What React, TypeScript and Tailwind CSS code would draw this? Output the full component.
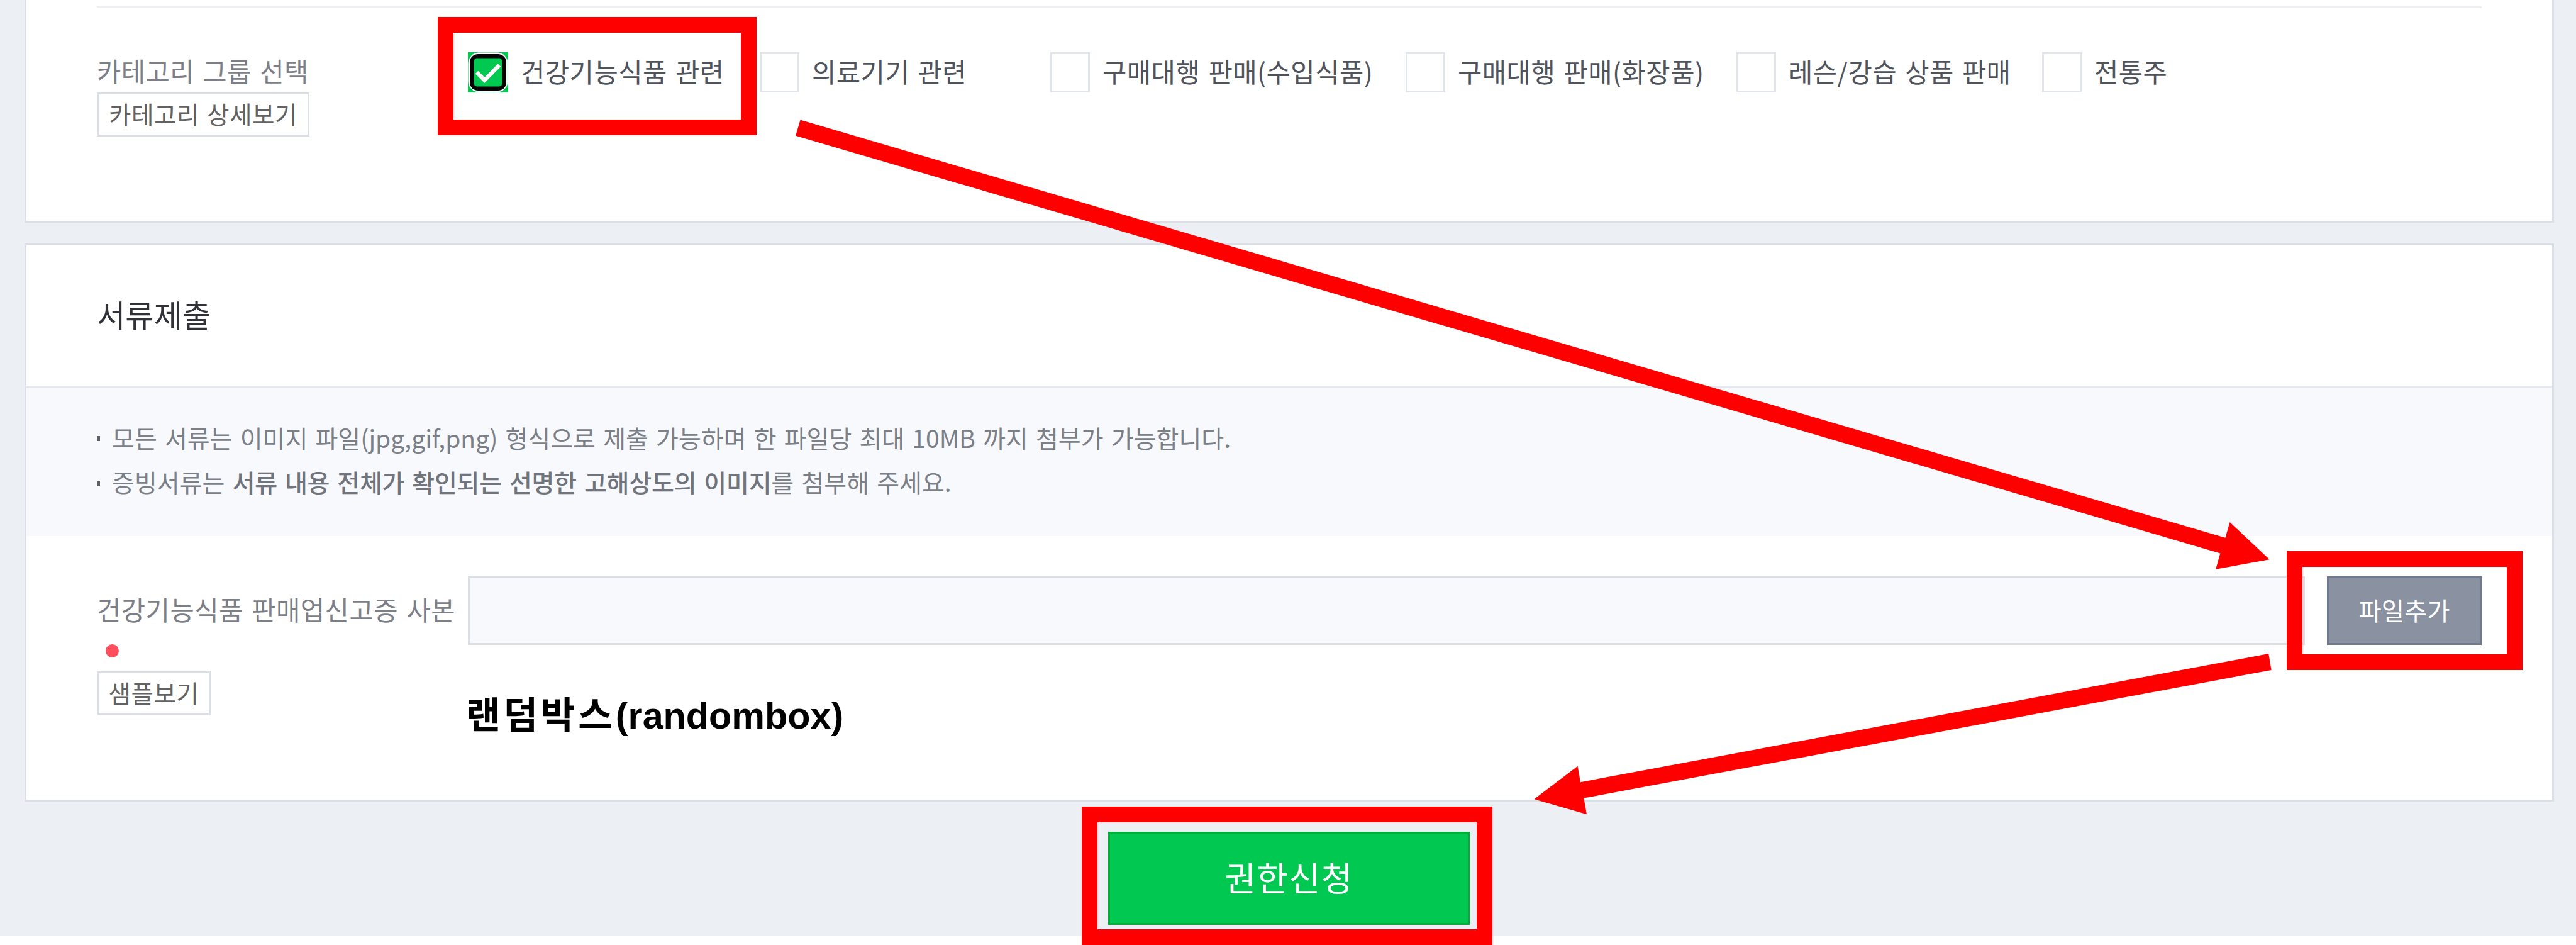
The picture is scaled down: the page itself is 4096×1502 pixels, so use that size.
import React from "react";

function CheckedBox() {
  return (
    <svg className="h-16 w-16 shrink-0" viewBox="0 0 64 64">
      <rect width="64" height="64" fill="#00c850" />
      <rect x="0.5" y="0.5" width="63" height="63" rx="17" fill="#ffffff" />
      <rect x="3" y="3" width="58" height="58" rx="13" fill="#050505" />
      <rect x="9.5" y="9.5" width="45" height="45" rx="5" fill="#00c850" />
      <path d="M14 32 L26.5 44.5 L50 20.5" fill="none" stroke="#ffffff" strokeWidth="6.5" />
    </svg>
  );
}

function Option({ label, checked = false }: { label: string; checked?: boolean }) {
  return (
    <label className="flex h-16 items-center gap-5 text-[#4f535c]">
      {checked ? (
        <CheckedBox />
      ) : (
        <span className="h-16 w-[63px] shrink-0 border-3 border-[#e1e5eb] bg-white" />
      )}
      <span className="-mt-[5px] whitespace-nowrap text-[41.7px] leading-[60px] tracking-[0.45px] [word-spacing:3.4px]">
        {label}
      </span>
    </label>
  );
}

function SmallButton({ label, className }: { label: string; className: string }) {
  return (
    <button
      className={`flex h-[70px] items-center justify-center whitespace-nowrap border-3 border-[#dcdee5] bg-white pb-1 text-[38.6px] leading-none tracking-[0.5px] text-[#626262] [word-spacing:3px] ${className}`}
    >
      {label}
    </button>
  );
}

function Notice({ children }: { children: React.ReactNode }) {
  return (
    <li className="flex h-[70.5px] items-center">
      <span className="mt-1 mr-[19px] h-2 w-[5px] bg-[#5d6068]" />
      <span className="-mt-px whitespace-nowrap leading-[70px]">{children}</span>
    </li>
  );
}

function Annotations() {
  return (
    <>
      <div className="absolute top-[27px] left-[696px] h-[188px] w-[507px] border-25 border-[#ff0000]" />
      <div className="absolute top-[876px] left-[3636px] h-[189px] w-[375px] border-25 border-[#ff0000]" />
      <div className="absolute top-[1282px] left-[1720px] h-[220px] w-[653px] border-25 border-[#ff0000]" />
      <svg
        className="pointer-events-none absolute inset-0 h-full w-full"
        viewBox="0 0 4400 1613"
        preserveAspectRatio="none"
        fill="#ff0000"
      >
        <path d="M1367 204.7 L3801 918 L3808.7 891.4 L3876.5 954.9 L3784.7 971.7 L3792.3 944.4 L1359 231.7 Z" />
        <path d="M3875 1115.9 L2699.6 1335 L2694.7 1307.7 L2620.4 1364 L2710.2 1390 L2705.3 1362.3 L3879.6 1143.6 Z" />
      </svg>
    </>
  );
}

export default function App() {
  return (
    <div className="relative h-[1502px] w-[4096px] overflow-hidden bg-white font-['Noto_Sans_CJK_KR',sans-serif]">
      <main className="flex h-[1488px] flex-col bg-[#eceff4] pr-[35px] pl-[39px]">
        <section className="h-[354px] border-x-3 border-b-3 border-[#dcdee5] bg-white pt-[10px] pr-[112px] pl-[112px]">
          <div className="h-[3px] bg-[#edeff5]" />
          <div className="flex pt-[70px]">
            <div className="w-[590px] shrink-0">
              <div className="-mt-1 flex h-[68px] items-center text-[41.7px] leading-none tracking-[0.4px] text-[#7c7f87] [word-spacing:3.6px]">
                카테고리 그룹 선택
              </div>
              <SmallButton label="카테고리 상세보기" className="w-[338px]" />
            </div>
            <div className="grid h-16 grid-cols-[464px_462px_565px_526px_486px_400px]">
              <Option label="건강기능식품 관련" checked />
              <Option label="의료기기 관련" />
              <Option label="구매대행 판매(수입식품)" />
              <Option label="구매대행 판매(화장품)" />
              <Option label="레슨/강습 상품 판매" />
              <Option label="전통주" />
            </div>
          </div>
        </section>

        <section className="mt-[33px] h-[887px] border-3 border-[#dcdee5] bg-white">
          <h2 className="flex h-[226px] items-center border-b-3 border-[#e4e7ee] pb-1.5 pl-[112px] text-[49.3px] text-[#303238]">
            서류제출
          </h2>
          <ul className="h-[236px] bg-[#f8f9fd] pt-[44px] pl-[112px] text-[39px] text-[#7b7f87] [word-spacing:3.4px]">
            <Notice>모든 서류는 이미지 파일(jpg,gif,png) 형식으로 제출 가능하며 한 파일당 최대 10MB 까지 첨부가 가능합니다.</Notice>
            <Notice>
              증빙서류는{" "}
              <b className="font-medium tracking-[-0.2px] text-[#70747c]">서류 내용 전체가 확인되는 선명한 고해상도의 이미지</b>를
              첨부해 주세요.
            </Notice>
          </ul>
          <div className="flex pt-16 pr-[112px] pl-[112px]">
            <div className="w-[590px] shrink-0">
              <div className="flex h-[108px] items-center whitespace-nowrap pb-0.5 text-[41.7px] leading-none tracking-[0.45px] text-[#7c7f87] [word-spacing:3.6px]">
                건강기능식품 판매업신고증 사본
              </div>
              <div className="ml-[14px] h-[21px] w-[21px] rounded-full bg-[#ff4f5e]" />
              <SmallButton label="샘플보기" className="mt-[22px] w-[181px]" />
            </div>
            <div className="flex-1">
              <div className="flex justify-between">
                <div className="h-[109px] w-[2921px] border-3 border-[#dcdee5] bg-[#f8f9fd]" />
                <button className="h-[109px] w-[246px] border-3 border-[#6f7990] bg-[#8a91a0] pb-1 text-[39.4px] text-white">
                  파일추가
                </button>
              </div>
              <p className="mt-[73px] -ml-[3px] whitespace-nowrap font-['Liberation_Sans','Noto_Sans_CJK_KR',sans-serif] text-[59.3px] leading-[80px] font-bold text-black">
                <span className="tracking-[4.9px]">랜덤박스</span>(randombox)
              </p>
            </div>
          </div>
        </section>

        <button className="mt-12 ml-[1723px] h-[148px] w-[575px] shrink-0 border-3 border-[#00ad3c] bg-[#00c850] pb-1.5 text-[54px] tracking-[1.5px] text-white">
          권한신청
        </button>
      </main>
      <Annotations />
    </div>
  );
}
